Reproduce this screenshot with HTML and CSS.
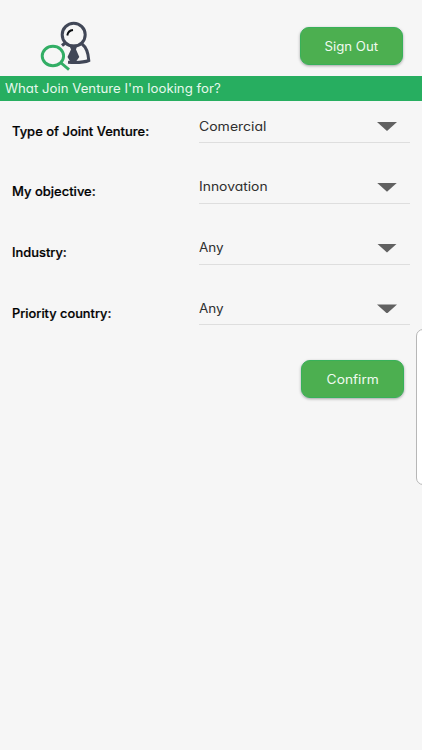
FILE: index.html
```html
<!DOCTYPE html>
<html lang="en">
<head>
<meta charset="utf-8">
<meta name="viewport" content="width=device-width, initial-scale=1">
<title>Joint Venture</title>
<link rel="stylesheet" href="styles.css">
</head>
<body>
<header class="top">
  <svg class="logo" viewBox="0 0 52 50" aria-hidden="true">
    <g fill="none" stroke="#414757">
      <circle cx="33.700" cy="13.800" r="11.500" stroke-width="3"/>
      <path d="M42 23Q48 27.500 48.800 39.500Q43 42 28 41.200" stroke-width="3"/>
      <path d="M26 21.500L22 24.500" stroke-width="3.300"/>
    </g>
    <path d="M29 23.500H37.500L36 28.500L39.300 36L35 42H31L27.500 36L31 28.500Z" fill="#414757"/>
    <path d="M27.300 14.500Q28 9.500 33 9" fill="none" stroke="#0c0f13" stroke-width="1.900"/>
    <g fill="none" stroke="#32ae65" stroke-width="2.900">
      <ellipse cx="12.900" cy="35" rx="10.700" ry="9.800"/>
      <path d="M20.500 41.500L29 48.700"/>
    </g>
  </svg>
  <button class="button"><span class="text sign-out">Sign Out</span></button>
</header>
<h1 class="banner"><span class="text title">What Join Venture I'm looking for?</span></h1>
<main class="form">
  <div class="row"><label class="label"><span class="text type">Type of Joint Venture:</span></label><div class="select"><span class="text comercial">Comercial</span><i class="arrow"></i></div></div>
  <div class="row"><label class="label"><span class="text objective">My objective:</span></label><div class="select"><span class="text innovation">Innovation</span><i class="arrow"></i></div></div>
  <div class="row"><label class="label"><span class="text industry">Industry:</span></label><div class="select"><span class="text any">Any</span><i class="arrow"></i></div></div>
  <div class="row"><label class="label"><span class="text country">Priority country:</span></label><div class="select"><span class="text any">Any</span><i class="arrow"></i></div></div>
  <button class="button confirm"><span class="text confirm-text">Confirm</span></button>
</main>
<aside class="edge-panel"></aside>
</body>
</html>
```
FILE: styles.css
```css
* { box-sizing: border-box; }
body { margin: 0; height: 750px; overflow: hidden; background: #f6f6f6; color: #000; font-family: Inter, "Noto Sans", sans-serif; font-size: 12.5px; font-feature-settings: "cv11"; position: relative; }
.top { height: 75.5px; padding: 21px 19px 0 40px; display: flex; justify-content: space-between; align-items: flex-start; }
.logo { width: 52px; height: 50px; }
.text { display: inline-block; transform-origin: left center; white-space: nowrap; }
.button { width: 103px; height: 38px; margin: 6px 0 0; padding: 0; border: 1px solid #38b159; border-radius: 9px; background: #4caf50; color: #effaef; font: inherit; font-feature-settings: inherit; box-shadow: 0 1px 3px rgba(0,0,0,.35); }
.sign-out { transform: scaleX(1.06); transform-origin: center; }
.confirm-text { transform: translateY(.5px) scaleX(1.1); transform-origin: center; }
.banner { height: 25px; margin: 0; padding-left: 5px; background: #27ae60; color: #e5f8ec; font-size: 12.5px; font-weight: 400; line-height: 25px; }
.title { transform: scaleX(1.058); }
.form { display: flex; flex-direction: column; padding: 9px 12px 0; }
.row { height: 60.8px; display: grid; grid-template-columns: 187px 211px; align-items: start; }
.label { padding-top: 11px; line-height: 22px; font-weight: 500; -webkit-text-stroke: .2px #000; }
.type { transform: scaleX(1.038); }
.objective { transform: scaleX(1.04); }
.industry { transform: scaleX(1.03); }
.country { transform: scaleX(1.024); }
.select { height: 33.5px; border-bottom: 1px solid #dedede; color: #303030; line-height: 33px; display: flex; justify-content: space-between; padding-right: 13px; }
.comercial { transform: scaleX(1.12); }
.innovation { transform: scaleX(1.11); }
.any { transform: scaleX(1.08); }
.arrow { width: 20px; height: 9px; margin-top: 12.5px; background: #616161; clip-path: polygon(0 0, 100% 0, 50% 100%); }
.confirm { align-self: flex-end; margin: 7px 6px 0 0; }
.edge-panel { position: absolute; left: 416px; top: 329px; width: 14px; height: 156px; border: 1px solid #b7b7b7; border-radius: 7px; background: #fff; }
```
